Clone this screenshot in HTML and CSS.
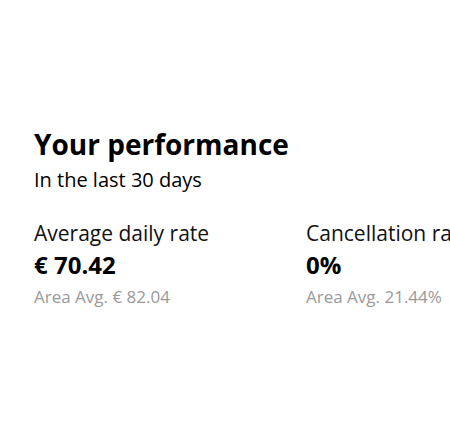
FILE: index.html
```html
<!DOCTYPE html>
<html>
<head>
<meta charset="utf-8">
<link rel="stylesheet" href="styles.css">
</head>
<body>
<main class="perf">
  <h1 class="title">Your performance</h1>
  <p class="subtitle">In the last 30 days</p>
  <div class="stats">
    <div class="stat">
      <div class="label">Average daily rate</div>
      <div class="value">€ 70.42</div>
      <div class="avg">Area Avg. € 82.04</div>
    </div>
    <div class="stat">
      <div class="label">Cancellation rate</div>
      <div class="value">0%</div>
      <div class="avg">Area Avg. 21.44%</div>
    </div>
  </div>
</main>
</body>
</html>
```
FILE: styles.css
```css
html, body {
  margin: 0;
  padding: 0;
  background: #fff;
  overflow: hidden;
}
body {
  font-family: "Open Sans", "Noto Sans", sans-serif;
  color: #000;
  width: 450px;
  height: 425px;
}
.perf {
  padding: 126px 0 0 34px;
}
.title {
  margin: 0;
  font-size: 28px;
  font-weight: 700;
  line-height: 36px;
}
.subtitle {
  margin: 2px 0 0;
  font-size: 20px;
  line-height: 32px;
}
.stats {
  display: flex;
  margin-top: 23px;
  white-space: nowrap;
}
.stat {
  flex: 0 0 272px;
}
.label {
  font-size: 21px;
  line-height: 28px;
  color: #111;
}
.value {
  font-size: 24px;
  font-weight: 700;
  line-height: 36px;
}
.avg {
  font-size: 17px;
  line-height: 27px;
  color: #999;
}
```
